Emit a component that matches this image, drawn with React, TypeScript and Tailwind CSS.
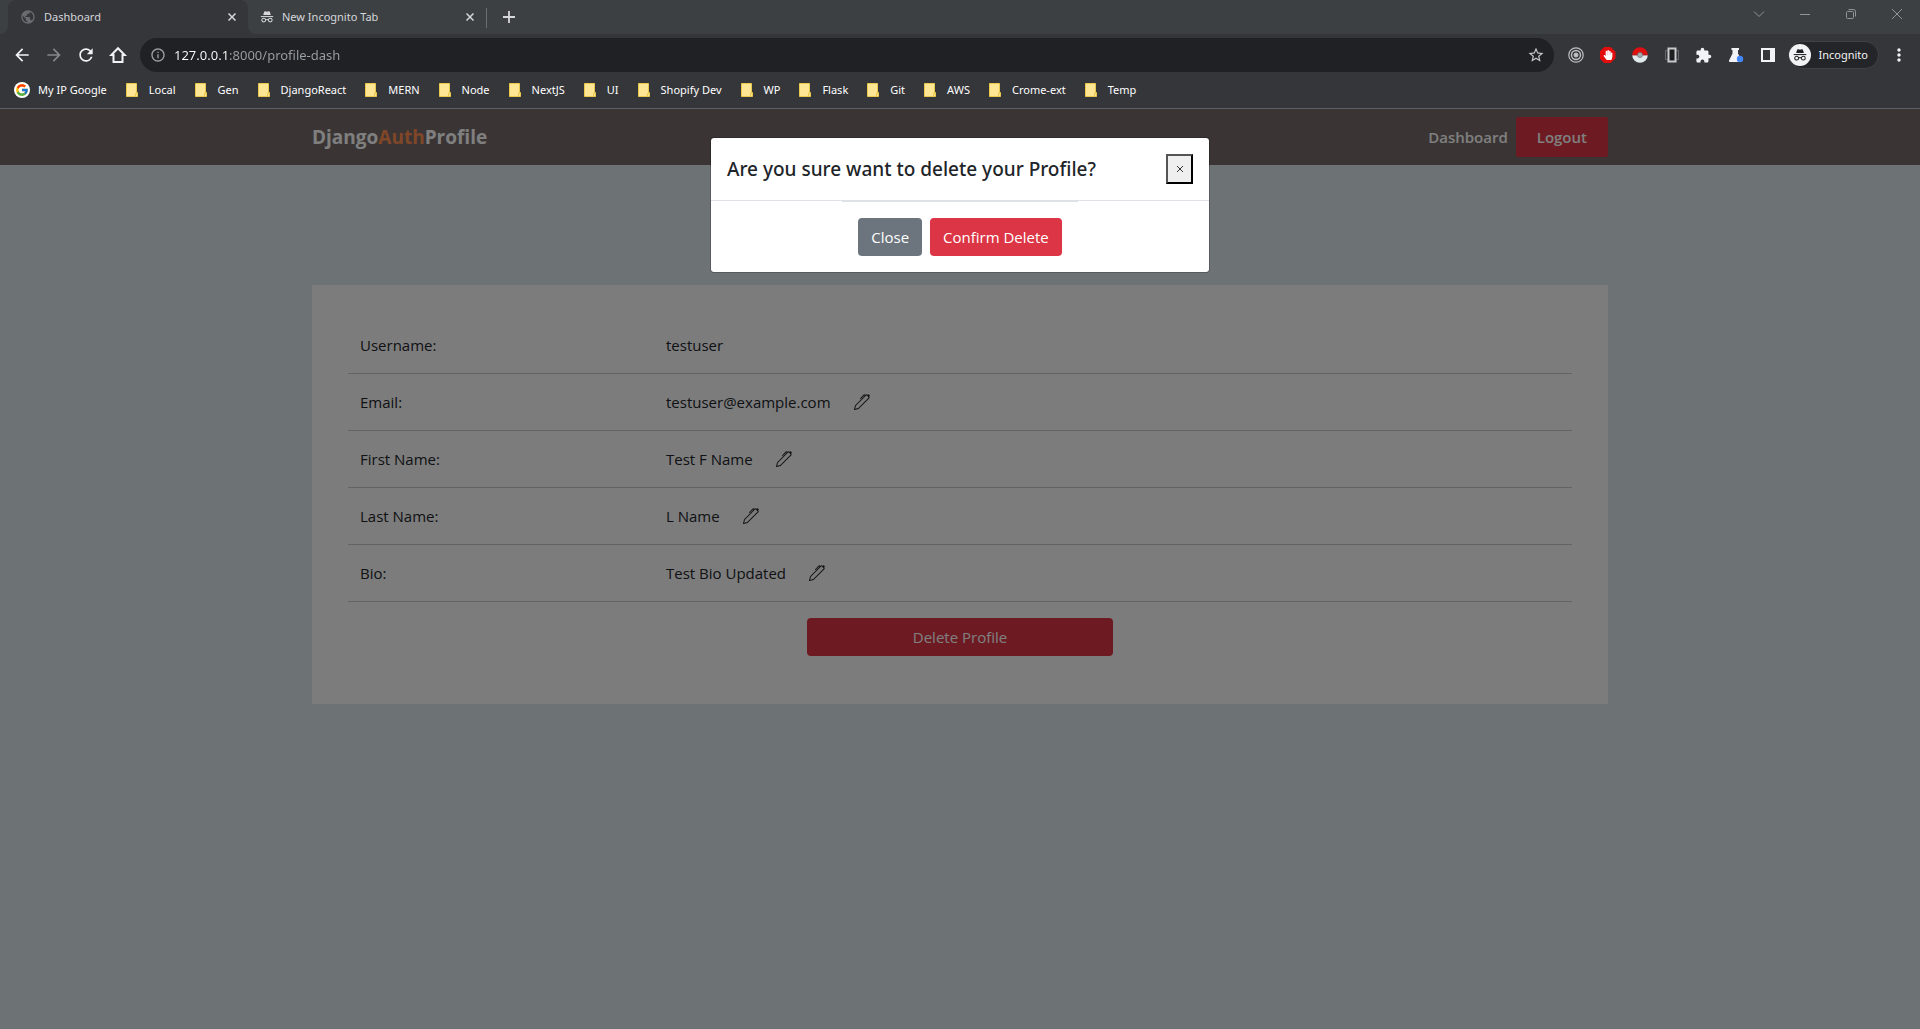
import type { ReactNode } from 'react';
import { MdArrowBack, MdArrowForward, MdRefresh, MdInfoOutline, MdStarBorder, MdExtension, MdPublic, MdMoreVert } from 'react-icons/md';
import { FaHandPaper } from 'react-icons/fa';
import { FcGoogle } from 'react-icons/fc';
import { BsPen } from 'react-icons/bs';

const bookmarks = ['Local', 'Gen', 'DjangoReact', 'MERN', 'Node', 'NextJS', 'UI', 'Shopify Dev', 'WP', 'Flask', 'Git', 'AWS', 'Crome-ext', 'Temp'];

const fields = [
  { label: 'Username:', value: 'testuser', editable: false },
  { label: 'Email:', value: 'testuser@example.com', editable: true },
  { label: 'First Name:', value: 'Test F Name', editable: true },
  { label: 'Last Name:', value: 'L Name', editable: true },
  { label: 'Bio:', value: 'Test Bio Updated', editable: true },
];

function IncognitoIcon({ className }: { className: string }) {
  return (
    <svg viewBox="0 0 16 14" className={className} aria-hidden="true">
      <path d="M4.6 1.2C4.8.5 5.4.2 6 .4l2 .5 2-.5c.6-.2 1.2.1 1.4.8l1 3.6H3.6z" fill="currentColor" />
      <path d="M.8 5.9h14.4v1.2H.8z" fill="currentColor" />
      <circle cx="4.2" cy="10.6" r="2.2" fill="none" stroke="currentColor" strokeWidth="1.2" />
      <circle cx="11.8" cy="10.6" r="2.2" fill="none" stroke="currentColor" strokeWidth="1.2" />
      <path d="M6.4 10.4q1.6-.9 3.2 0" fill="none" stroke="currentColor" strokeWidth="1.2" />
    </svg>
  );
}

function CloseIcon() {
  return (
    <svg viewBox="0 0 8 8" className="size-2" aria-hidden="true">
      <path d="M.5.5l7 7M7.5.5l-7 7" stroke="currentColor" strokeWidth="1.5" />
    </svg>
  );
}

function FolderIcon() {
  return (
    <svg viewBox="0 0 12 14" className="h-3.5 w-3 shrink-0" aria-hidden="true">
      <path d="M.5.5h10v9h1v4H.5z" fill="#ffe694" stroke="#e9c84d" />
      <path d="M9.5 13.500V10.500h2" fill="none" stroke="#e9c84d" />
    </svg>
  );
}

function IconButton({ label, children }: { label: string; children: ReactNode }) {
  return (
    <button type="button" aria-label={label} className="flex h-8 w-8 shrink-0 items-center justify-center">
      {children}
    </button>
  );
}

function WindowButton({ label, d }: { label: string; d: string }) {
  return (
    <button type="button" aria-label={label} className="flex h-7 w-[46px] items-center justify-center text-[#929598]">
      <svg viewBox="0 0 12 12" className="size-3" aria-hidden="true">
        <path d={d} fill="none" stroke="currentColor" />
      </svg>
    </button>
  );
}

function TabStrip() {
  return (
    <div className="flex h-[34px] items-stretch bg-[#3c4043] pl-2 text-[#d5d7da]">
      <div className="relative flex w-60 items-center rounded-t-lg bg-[#35363a] px-3">
        <svg viewBox="0 0 8 8" className="absolute bottom-0 -left-2 size-2" aria-hidden="true">
          <path d="M8 0v8H0a8 8 0 0 0 8-8z" fill="#35363a" />
        </svg>
        <svg viewBox="0 0 8 8" className="absolute -right-2 bottom-0 size-2" aria-hidden="true">
          <path d="M0 0v8h8a8 8 0 0 1-8-8z" fill="#35363a" />
        </svg>
        <MdPublic className="size-4 text-[#686b70]" />
        <span className="ml-2 flex-1">Dashboard</span>
        <button type="button" aria-label="Close Dashboard tab"><CloseIcon /></button>
      </div>
      <div className="flex w-[238px] items-center px-3">
        <IncognitoIcon className="h-3 w-3.5" />
        <span className="ml-2 flex-1">New Incognito Tab</span>
        <button type="button" aria-label="Close New Incognito Tab"><CloseIcon /></button>
      </div>
      <div className="mt-2 h-5 w-px bg-[#6b6e72]" />
      <button type="button" aria-label="New tab" className="ml-2 flex w-7 items-center justify-center">
        <svg viewBox="0 0 12 12" className="size-3" aria-hidden="true">
          <path d="M6 0v12M0 6h12" stroke="currentColor" strokeWidth="1.8" />
        </svg>
      </button>
      <div className="ml-auto flex">
        <WindowButton label="Search tabs" d="M1 3.500l5 5 5-5" />
        <WindowButton label="Minimize" d="M1 6.500h10" />
        <WindowButton label="Restore" d="M1.500 4.500q0-1 1-1h5q1 0 1 1v5q0 1-1 1h-5q-1 0-1-1zM3.500 1.500h5q2 0 2 2v5" />
        <WindowButton label="Close window" d="M1 1l10 10M11 1L1 11" />
      </div>
    </div>
  );
}

function Toolbar() {
  return (
    <div className="flex items-center py-1 pr-[5px] pl-1.5 text-[#f1f3f4]">
      <IconButton label="Back"><MdArrowBack className="size-5" /></IconButton>
      <IconButton label="Forward"><MdArrowForward className="size-5 text-[#85868a]" /></IconButton>
      <IconButton label="Reload"><MdRefresh className="size-5" /></IconButton>
      <IconButton label="Home">
        <svg viewBox="0 0 18 18" className="size-[18px]" aria-hidden="true">
          <path d="M9 2.200L2.300 9H4.500v7h9V9h2.200z" fill="none" stroke="currentColor" strokeWidth="2" />
        </svg>
      </IconButton>
      <div className="ml-1.5 flex h-[34px] flex-1 items-center rounded-full bg-[#202124] pr-[9px] pl-2.5">
        <MdInfoOutline className="size-4 shrink-0 text-[#9aa0a6]" />
        <input
          aria-label="Address"
          defaultValue="127.0.0.1:8000/profile-dash"
          className="ml-2 min-w-0 flex-1 bg-[linear-gradient(to_right,#ffffff_54px,#9aa0a6_54px)] bg-clip-text text-[13px] leading-5 text-transparent outline-none"
        />
        <button type="button" aria-label="Bookmark this page"><MdStarBorder className="size-[18px] text-[#c3c5c8]" /></button>
      </div>
      <div className="ml-1.5 flex">
        <IconButton label="Recorder extension">
          <svg viewBox="0 0 16 16" className="size-4" fill="none" stroke="#c0c1c4" aria-hidden="true">
            <circle cx="8" cy="8" r="7.200" strokeWidth="1.200" />
            <circle cx="8" cy="8" r="4.500" strokeWidth="1.400" />
            <circle cx="8" cy="8" r="2" fill="#c0c1c4" />
          </svg>
        </IconButton>
        <IconButton label="Ad blocker extension">
          <span className="flex size-4 items-center justify-center bg-[#e40d0d] [clip-path:polygon(30%_0,70%_0,100%_30%,100%_70%,70%_100%,30%_100%,0_70%,0_30%)]">
            <FaHandPaper className="size-2.5 text-white" />
          </span>
        </IconButton>
        <IconButton label="Pokeball extension">
          <svg viewBox="0 0 16 16" className="size-4" aria-hidden="true">
            <path d="M.2 8a7.800 7.800 0 0 1 15.600 0z" fill="#df0f0f" />
            <path d="M.2 8a7.800 7.800 0 0 0 15.600 0z" fill="#dfe9ee" />
            <path d="M0 7.600h16v.8H0z" fill="#8f2020" />
            <circle cx="8" cy="8" r="2.500" fill="#a9adb0" stroke="#6f7477" strokeWidth=".8" />
          </svg>
        </IconButton>
        <IconButton label="Device extension">
          <svg viewBox="0 0 16 16" className="size-4" fill="none" aria-hidden="true">
            <path d="M4 3.500H1.500v9H4M12 3.500h2.500v9H12" stroke="#66686c" />
            <path d="M4.500 1.500h7v13h-7z" fill="#1d1e20" stroke="#c9cacc" strokeWidth="2" />
          </svg>
        </IconButton>
        <IconButton label="Extensions"><MdExtension className="size-[17px]" /></IconButton>
        <IconButton label="Labs">
          <svg viewBox="0 0 16 16" className="size-4" aria-hidden="true">
            <path d="M3.500 1h7.500v2h-1v3.500l3.500 7q.5 1.500-1 1.500H2q-1.500 0-1-1.500l3.500-7V3h-1z" fill="currentColor" />
            <circle cx="12" cy="12" r="3.200" fill="#4285f4" />
          </svg>
        </IconButton>
        <IconButton label="Side panel">
          <svg viewBox="0 0 14 14" className="size-3.5" aria-hidden="true">
            <path d="M0 0h14v14H0zM2 2v10h7V2z" fill="currentColor" fillRule="evenodd" />
          </svg>
        </IconButton>
      </div>
      <button type="button" className="ml-1 flex h-7 items-center rounded-full border border-[#3f4145] bg-[#242528] pr-2.5">
        <span className="flex size-[22px] items-center justify-center rounded-full bg-[#f1f3f4] text-[#202124]">
          <IncognitoIcon className="h-3.5 w-3.5" />
        </span>
        <span className="ml-2">Incognito</span>
      </button>
      <div className="ml-1">
        <IconButton label="Browser menu"><MdMoreVert className="size-5" /></IconButton>
      </div>
    </div>
  );
}

function BookmarksBar() {
  return (
    <nav aria-label="Bookmarks" className="flex h-[33px] items-start gap-[19px] border-b border-[#5f6065] pl-3.5 text-white">
      <a href="#" className="flex h-7 items-center gap-2">
        <span className="flex size-4 items-center justify-center rounded-full bg-white"><FcGoogle className="size-3.5" /></span>
        My IP Google
      </a>
      {bookmarks.map((name) => (
        <a key={name} href="#" className="flex h-7 items-center gap-[11px] whitespace-nowrap">
          <FolderIcon />
          {name}
        </a>
      ))}
    </nav>
  );
}

function SiteHeader() {
  return (
    <header className="bg-[#746a69] px-3 py-2">
      <div className="mx-auto flex max-w-[1296px] items-center justify-between">
        <a href="#" className="text-[19px] leading-7 font-bold text-white">
          Django<span className="text-[#ff8f50]">Auth</span>Profile
        </a>
        <div className="flex items-center gap-2 font-semibold text-white">
          <a href="#">Dashboard</a>
          <button type="button" className="h-10 rounded-xs bg-[#dc3545] px-[21px]">Logout</button>
        </div>
      </div>
    </header>
  );
}

function ProfileCard() {
  return (
    <section className="mx-auto mt-30 max-w-[1296px] bg-[#f9f9f9] px-9 pt-8 pb-12">
      <dl>
        {fields.map((field) => (
          <div key={field.label} className="grid grid-cols-4 border-b border-[#c6c6c6] py-4">
            <dt className="px-3">{field.label}</dt>
            <dd className="col-span-3 flex items-center gap-[23px] px-3">
              {field.value}
              {field.editable && (
                <button type="button" aria-label={'Edit ' + field.label.replace(':', '')}>
                  <BsPen className="size-4" />
                </button>
              )}
            </dd>
          </div>
        ))}
      </dl>
      <button type="button" className="mx-auto mt-4 block h-[38px] w-1/4 rounded bg-[#dc3545] text-white">
        Delete Profile
      </button>
    </section>
  );
}

function DeleteDialog() {
  return (
    <div className="absolute inset-0 bg-black/50 px-3">
      <div role="dialog" aria-modal="true" aria-labelledby="delete-title" className="mx-auto mt-7 max-w-[500px] rounded border border-black/20 bg-white bg-clip-padding">
        <div className="flex items-center justify-between border-b border-[#dee2e6] p-4">
          <h5 id="delete-title" className="font-['Noto_Sans','Open_Sans',sans-serif] text-[19px] leading-[30px] font-medium">
            Are you sure want to delete your Profile?
          </h5>
          <button type="button" aria-label="Dismiss" className="flex h-[30px] w-[27px] items-center justify-center border-2 border-t-[#555555] border-r-black border-b-black border-l-[#555555] bg-[#efefef]">
            <svg viewBox="0 0 8 8" className="size-2" aria-hidden="true">
              <path d="M1 1l6 6M7 1L1 7" stroke="#333333" />
            </svg>
          </button>
        </div>
        <div className="mx-auto flex w-fit gap-2 border-t border-[#dee2e6] p-4 text-white">
          <button type="button" className="h-[38px] rounded bg-[#6c757d] px-[13px]">Close</button>
          <button type="button" className="h-[38px] rounded bg-[#dc3545] px-[13px]">Confirm Delete</button>
        </div>
      </div>
    </div>
  );
}

export default function App() {
  return (
    <div className="flex min-h-screen flex-col font-['Open_Sans','Noto_Sans',sans-serif]">
      <div className="bg-[#35363a] font-['Noto_Sans','Open_Sans',sans-serif] text-[11px] leading-4">
        <TabStrip />
        <Toolbar />
        <BookmarksBar />
      </div>
      <div className="relative flex-1 bg-[#dae4ea] text-[15px] leading-6 text-[#212529]">
        <SiteHeader />
        <main className="px-3">
          <ProfileCard />
        </main>
        <DeleteDialog />
      </div>
    </div>
  );
}
